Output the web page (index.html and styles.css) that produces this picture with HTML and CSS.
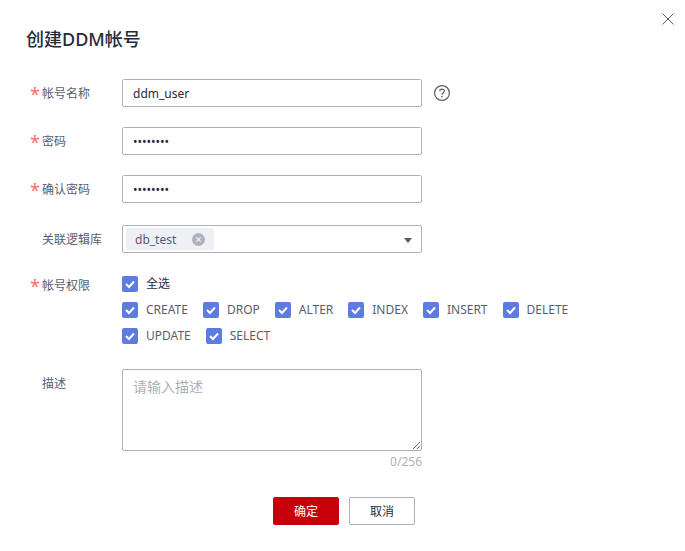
FILE: index.html
```html
<!DOCTYPE html>
<html lang="zh-CN">
<head>
  <meta charset="UTF-8" />
  <title>创建DDM帐号</title>
  <link rel="stylesheet" href="styles.css">
</head>
<body>
  <div class="dialog">
    <svg class="close-icon" width="12" height="12" viewBox="0 0 12 12"><path d="M.5.5l11 11M11.500.5l-11 11" stroke="#575d6c" fill="none"/></svg>
    <h1 class="dialog-title">创建DDM帐号</h1>

    <div class="form-row">
      <label class="form-label required">帐号名称</label>
      <input class="text-input" type="text" value="ddm_user">
      <svg class="help-icon" width="16" height="16" viewBox="0 0 16 16">
        <circle cx="8" cy="8" r="7.4" stroke="#575d6c" stroke-width="1.200" fill="none"/>
        <path d="M5.700 6.300c0-1.400 1-2.200 2.300-2.200s2.300.8 2.300 2c0 1.900-2.300 1.800-2.300 3.600" stroke="#575d6c" stroke-width="1.200" fill="none"/>
        <circle cx="8" cy="11.700" r=".8" fill="#575d6c"/>
      </svg>
    </div>
    <div class="form-row">
      <label class="form-label required">密码</label>
      <input class="text-input" type="password" value="12345678">
    </div>
    <div class="form-row">
      <label class="form-label required">确认密码</label>
      <input class="text-input" type="password" value="12345678">
    </div>
    <div class="form-row select-row">
      <label class="form-label">关联逻辑库</label>
      <div class="tag-select">
        <span class="tag">db_test
          <svg class="tag-close" width="13" height="13" viewBox="0 0 13 13"><circle cx="6.500" cy="6.500" r="6.500" fill="#b0b2bb"/><path d="M4.300 4.300l4.400 4.400M8.700 4.300l-4.400 4.400" stroke="#eef0f5" stroke-width="1.200"/></svg>
        </span>
        <span class="caret"></span>
      </div>
    </div>

    <div class="form-row perm-row">
      <label class="form-label required">帐号权限</label>
      <div class="perm-list">
        <div class="check-line">
          <span class="check zh"><svg class="box" viewBox="0 0 16 16"><path d="M4 8l3 3 5-5.500" /></svg>全选</span>
        </div>
        <div class="check-line">
          <span class="check"><svg class="box" viewBox="0 0 16 16"><path d="M4 8l3 3 5-5.500" /></svg>CREATE</span>
          <span class="check"><svg class="box" viewBox="0 0 16 16"><path d="M4 8l3 3 5-5.500" /></svg>DROP</span>
          <span class="check"><svg class="box" viewBox="0 0 16 16"><path d="M4 8l3 3 5-5.500" /></svg>ALTER</span>
          <span class="check"><svg class="box" viewBox="0 0 16 16"><path d="M4 8l3 3 5-5.500" /></svg>INDEX</span>
          <span class="check"><svg class="box" viewBox="0 0 16 16"><path d="M4 8l3 3 5-5.500" /></svg>INSERT</span>
          <span class="check"><svg class="box" viewBox="0 0 16 16"><path d="M4 8l3 3 5-5.500" /></svg>DELETE</span>
        </div>
        <div class="check-line">
          <span class="check"><svg class="box" viewBox="0 0 16 16"><path d="M4 8l3 3 5-5.500" /></svg>UPDATE</span>
          <span class="check"><svg class="box" viewBox="0 0 16 16"><path d="M4 8l3 3 5-5.500" /></svg>SELECT</span>
        </div>
      </div>
    </div>

    <div class="form-row desc-row">
      <label class="form-label">描述</label>
      <div class="desc-field">
        <textarea class="desc-input" placeholder="请输入描述"></textarea>
        <div class="counter">0/256</div>
      </div>
    </div>

    <div class="actions">
      <button class="btn btn-primary">确定</button>
      <button class="btn">取消</button>
    </div>
  </div>
</body>
</html>
```

FILE: styles.css
```css
* {
  box-sizing: border-box;
}

body {
  margin: 0;
  background: #fff;
  color: #252b3a;
  font-family: "Noto Sans", "Noto Sans CJK SC", sans-serif;
  font-size: 12px;
}

.dialog {
  position: relative;
  width: 685px;
  height: 551px;
  padding: 27px 0 0 30px;
  overflow: hidden;
}

.close-icon {
  position: absolute;
  top: 13px;
  left: 662px;
}

.dialog-title {
  margin: 0 0 28px -4px;
  font-size: 18px;
  line-height: 24px;
  font-weight: 500;
  color: #252b3a;
}

.form-row {
  display: flex;
  align-items: center;
  height: 28px;
  margin-bottom: 20px;
}

.form-label {
  position: relative;
  width: 92px;
  padding-left: 12px;
  flex: none;
  color: #575d6c;
}

.required::before {
  content: "*";
  position: absolute;
  left: 0;
  top: 1px;
  color: #f66f6a;
  font-size: 18px;
  line-height: 18px;
}

.text-input {
  width: 300px;
  height: 28px;
  padding: 0 10px;
  border: 1px solid #adb0b8;
  border-radius: 2px;
  outline: none;
  color: #252b3a;
  font: inherit;
}

.help-icon {
  margin-left: 12px;
}

.select-row {
  margin-top: 22px;
  margin-bottom: 23px;
}

.tag-select {
  position: relative;
  display: flex;
  align-items: center;
  width: 300px;
  height: 28px;
  padding-left: 3px;
  border: 1px solid #adb0b8;
  border-radius: 2px;
}

.tag {
  display: flex;
  align-items: center;
  gap: 16px;
  height: 22px;
  padding: 0 9px;
  border-radius: 2px;
  background: #eef0f5;
  color: #575d6c;
}

.caret {
  position: absolute;
  right: 9px;
  top: 12px;
  border-top: 5px solid #575d6c;
  border-left: 4px solid transparent;
  border-right: 4px solid transparent;
}

.perm-row {
  align-items: flex-start;
  height: auto;
  margin-bottom: 25px;
}

.perm-list {
  display: flex;
  flex-direction: column;
  gap: 10px;
}

.check-line {
  display: flex;
  gap: 15px;
  height: 16px;
}

.check {
  display: flex;
  align-items: center;
  gap: 8px;
  color: #575d6c;
  line-height: 16px;
}

.check.zh {
  color: #252b3a;
}

.box {
  width: 16px;
  height: 16px;
  border-radius: 2px;
  background: #5e7ce0;
  flex: none;
}

.box path {
  fill: none;
  stroke: #fff;
  stroke-width: 2;
}

.desc-row {
  align-items: flex-start;
  height: auto;
  margin-bottom: 0;
}

.desc-row .form-label {
  padding-top: 5px;
}

.desc-input {
  display: block;
  width: 300px;
  height: 82px;
  padding: 6px 10px;
  border: 1px solid #adb0b8;
  border-radius: 2px;
  outline: none;
  font: inherit;
  font-size: 14px;
}

.desc-input::placeholder {
  color: #adb0b8;
}

.counter {
  margin-top: 3px;
  text-align: right;
  line-height: 16px;
  color: #adb0b8;
}

.actions {
  display: flex;
  justify-content: flex-start;
  gap: 10px;
  margin: 27px 0 0 243px;
}

.btn {
  width: 66px;
  height: 28px;
  padding: 0;
  border: 1px solid #adb0b8;
  border-radius: 2px;
  background: #fff;
  color: #252b3a;
  font: inherit;
}

.btn-primary {
  border-color: #c7000b;
  background: #c7000b;
  color: #fff;
}
```
